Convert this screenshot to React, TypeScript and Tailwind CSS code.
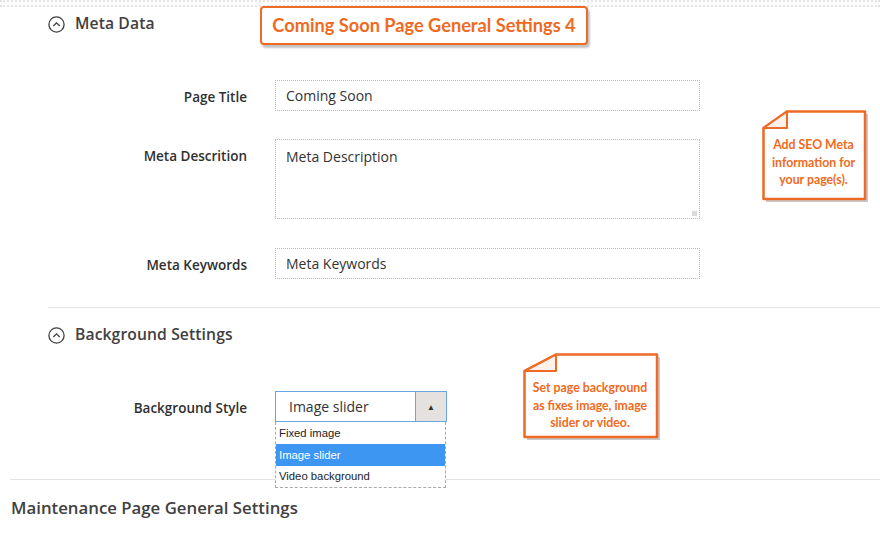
import React from "react";

function CircleUp() {
  return (
    <svg width="17" height="17" viewBox="0 0 17 17" className="shrink-0">
      <circle cx="8.5" cy="8.5" r="7.6" fill="none" stroke="#41403f" strokeWidth="1.3" />
      <path d="M5.3 10 L8.5 6.8 L11.7 10" fill="none" stroke="#41403f" strokeWidth="1.3" />
    </svg>
  );
}

function SectionHeading({ title }: { title: string }) {
  return (
    <div className="flex items-center gap-[10px] h-[34px] ml-[48px]">
      <CircleUp />
      <span className="text-[15.7px] font-semibold text-[#41403f] tracking-[0.1px]">{title}</span>
    </div>
  );
}

function Label({ children, className = "" }: { children: React.ReactNode; className?: string }) {
  return (
    <div className={`w-[247px] shrink-0 text-right text-[13.5px] font-semibold text-[#303030] ${className}`}>
      {children}
    </div>
  );
}

// note shape with the folded top-left corner
function Note({ w, h, fx, fy, lines, className }: { w: number; h: number; fx: number; fy: number; lines: string[]; className: string }) {
  return (
    <div className={`absolute ${className}`} style={{ width: w + 4, height: h + 4 }}>
      <svg width={w + 4} height={h + 4} className="absolute left-0 top-0">
        <path d={`M${fx + 4},4 L${w + 3},4 L${w + 3},${h + 3} L4,${h + 3} L4,${fy + 4} Z`} fill="#c9c9c9" />
        <path d={`M${fx + 1},1.5 L${w},1.5 L${w},${h} L1.5,${h} L1.5,${fy + 1} Z`} fill="#fff" stroke="#ee6a25" strokeWidth="2.5" strokeLinejoin="round" />
        <path d={`M1.5,${fy + 1} L${fx + 1},${fy + 1} L${fx + 1},1.5 Z`} fill="#fdf1ea" stroke="#ee6a25" strokeWidth="2" strokeLinejoin="round" />
      </svg>
      <div className="absolute left-0 right-0 flex flex-col items-center text-center text-[12.3px] leading-[17.5px] font-bold text-[#f06a22] font-['Lato',sans-serif]" style={{ top: fy + 9, width: w }}>
        {lines.map((l) => (
          <span key={l}>{l}</span>
        ))}
      </div>
    </div>
  );
}

export default function App() {
  return (
    <div className="relative w-[880px] h-[533px] bg-white overflow-hidden font-['Open_Sans',sans-serif]">
      <div className="h-[7px] border-t-2 border-dotted border-b-2 border-[#e4e4e4]" />

      <SectionHeading title="Meta Data" />

      <div className="flex items-center mt-[39px]">
        <Label className="pt-[3px]">Page Title</Label>
        <div className="ml-[28px] w-[425px] h-[31px] border border-dotted border-[#b9b9b9] flex items-center px-[10px] text-[14px] text-[#333]">
          Coming Soon
        </div>
      </div>

      <div className="flex items-start mt-[28px]">
        <Label className="pt-[7px]">Meta Descrition</Label>
        <div className="relative ml-[28px] w-[425px] h-[80px] border border-dotted border-[#b9b9b9] px-[10px] pt-[6px] text-[14px] text-[#333]">
          Meta Description
          <span className="absolute right-[2px] bottom-[2px] w-[5px] h-[5px] bg-[#dcdcdc]" />
        </div>
      </div>

      <div className="flex items-center mt-[29px]">
        <Label className="pt-[3px]">Meta Keywords</Label>
        <div className="ml-[28px] w-[425px] h-[31px] border border-dotted border-[#b9b9b9] flex items-center px-[10px] text-[14px] text-[#333]">
          Meta Keywords
        </div>
      </div>

      <div className="mt-[28px] ml-[48px] h-px bg-[#e2e2e2]" />

      <div className="mt-[10px]">
        <SectionHeading title="Background Settings" />
      </div>

      <div className="flex items-center mt-[39px]">
        <Label className="pt-[3px]">Background Style</Label>
        <div className="relative ml-[28px]">
          <div className="w-[172px] h-[31px] border border-[#6aa7e2] flex">
            <div className="flex-1 flex items-center pl-[13px] text-[14px] text-[#333]">Image slider</div>
            <div className="w-[31px] bg-[#e4e1df] border-l border-[#6aa7e2] flex items-center justify-center">
              <span className="text-[8px] text-[#303030]">▲</span>
            </div>
          </div>
          <div className="absolute left-0 top-full w-[171px] bg-white border border-dashed border-[#a9a9a9] border-t-0 z-10 text-[11.3px] text-[#222] font-['Liberation_Sans',sans-serif]">
            <div className="h-[22px] flex items-center pl-[3px]">Fixed image</div>
            <div className="h-[22px] flex items-center pl-[3px] bg-[#3d97f2] text-white">Image slider</div>
            <div className="h-[21px] flex items-center pl-[3px]">Video background</div>
          </div>
        </div>
      </div>

      <div className="mt-[57px] ml-[10px] h-px bg-[#e2e2e2]" />

      <div className="mt-[11px] h-[34px] flex items-center pl-[11px] text-[16.8px] font-semibold text-[#41403f]">
        Maintenance Page General Settings
      </div>

      {/* annotations */}
      <div className="absolute left-[260px] top-[6px] w-[328px] h-[39px] rounded-[4px] border-[2.5px] border-[#ee6a25] bg-white shadow-[2px_3px_2px_#c4c4c4] flex items-center justify-center text-[18.2px] font-bold text-[#f06a22] font-['Lato',sans-serif]">
        Coming Soon Page General Settings 4
      </div>

      <Note className="left-[762px] top-[110px]" w={103} h={89} fx={24} fy={17} lines={["Add SEO Meta", "information for", "your page(s)."]} />
      <Note className="left-[523px] top-[353px]" w={134} h={84} fx={32} fy={17} lines={["Set page background", "as fixes image, image", "slider or video."]} />
    </div>
  );
}
